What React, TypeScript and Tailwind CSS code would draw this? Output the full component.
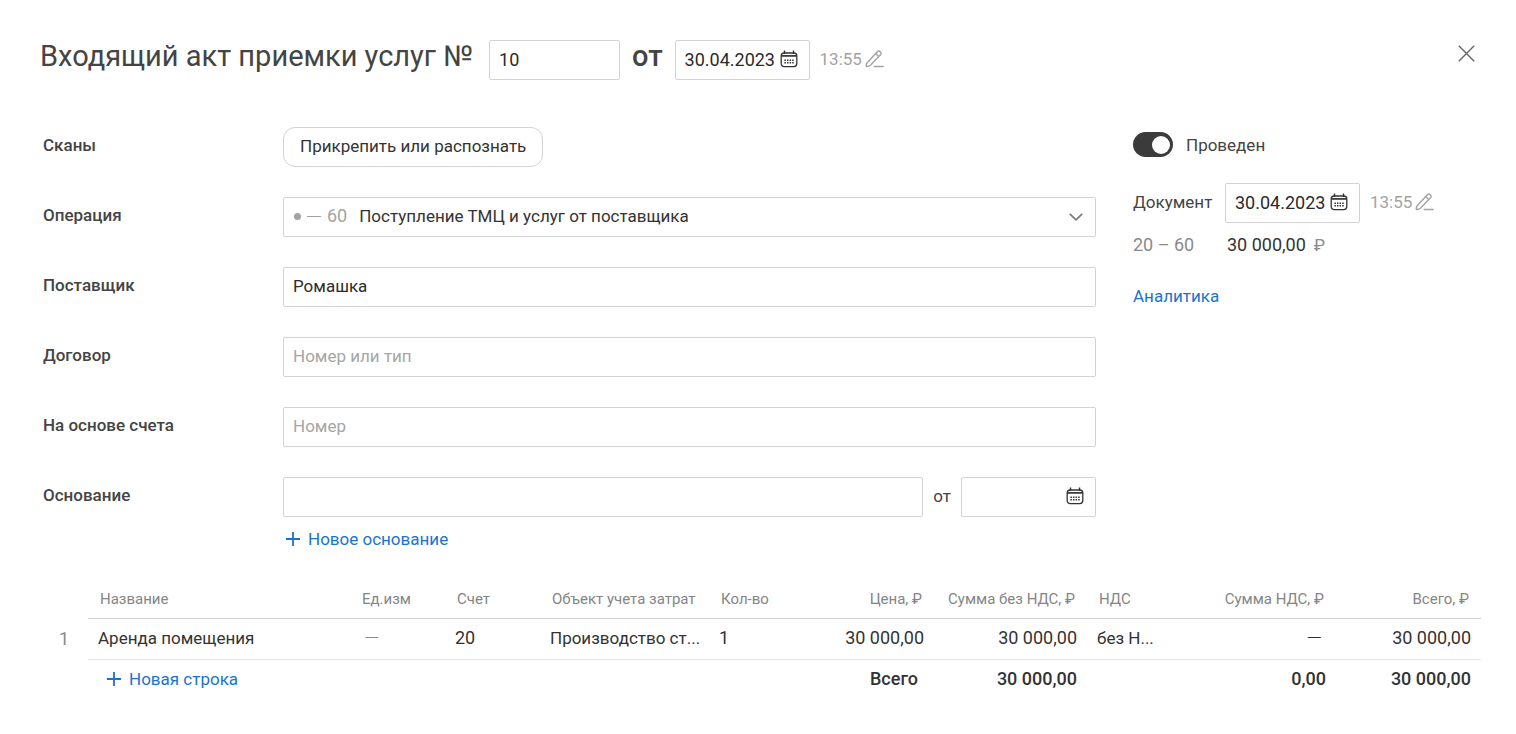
import { useId } from "react";
import type { ReactNode } from "react";

const field =
  "h-10 rounded-xs border border-[#d3d3d3] bg-white px-[9px] pb-0.5 text-[#2b2b2b] placeholder:text-[#a6a6a6] outline-none focus:border-[#1973d1]";

function CalendarIcon() {
  return (
    <svg width="18" height="18" viewBox="0 0 18 18" fill="none" stroke="#333" aria-hidden="true">
      <rect x="1.2" y="3" width="15.6" height="13.6" rx="3" strokeWidth="1.3" />
      <path d="M1.2 5.9H16.8" strokeWidth="1.7" />
      <path d="M4.5 0.6V4M13.5 0.6V4" strokeWidth="1.4" />
      <path d="M4.4 10.2H14M4.4 12.7H14" strokeWidth="1.4" strokeDasharray="1.5 1.1" />
    </svg>
  );
}

function PencilIcon() {
  return (
    <svg width="19" height="18" viewBox="0 0 19 18" fill="none" stroke="#a3a3a3" strokeWidth="1.4" aria-hidden="true">
      <path
        d="M1.3 16.5Q0.9 14.2 2.6 12.3L12.4 1.7Q13.8 0.5 15.2 1.7Q16.8 3.2 15.5 4.7L5.6 15Q3.8 16.6 1.3 16.5Z"
        strokeLinejoin="round"
      />
      <path d="M10.7 3.6L13.6 6.5M8.8 16.5H18.7" />
    </svg>
  );
}

function PlusIcon() {
  return (
    <svg width="16" height="16" viewBox="0 0 16 16" stroke="#1973d1" strokeWidth="1.8" aria-hidden="true">
      <path d="M8 1V15M1 8H15" />
    </svg>
  );
}

function DateField({ label, value }: { label: string; value?: string }) {
  return (
    <div className="flex h-10 w-[135px] shrink-0 items-center rounded-xs border border-[#d3d3d3] pr-[11px] focus-within:border-[#1973d1]">
      <input
        type="text"
        aria-label={label}
        defaultValue={value}
        className="h-full w-0 flex-1 bg-transparent pb-0.5 pl-[9px] text-lg text-[#2b2b2b] outline-none"
      />
      <button type="button" aria-label="Открыть календарь" className="mb-[3px]">
        <CalendarIcon />
      </button>
    </div>
  );
}

function Time() {
  return (
    <span className="flex items-center gap-[3px] text-[17px] leading-6 text-[#a3a3a3]">
      13:55
      <button type="button" aria-label="Изменить время">
        <PencilIcon />
      </button>
    </span>
  );
}

function Row({ label, id, children }: { label: string; id: string; children: ReactNode }) {
  return (
    <div className="flex">
      <label htmlFor={id} className="w-60 shrink-0 pt-1.5 text-[17px] leading-6 font-medium text-[#444]">
        {label}
      </label>
      <div className="min-w-0 flex-1">{children}</div>
    </div>
  );
}

function AddButton({ children }: { children: ReactNode }) {
  return (
    <button type="button" className="flex items-center gap-[7px] text-[17px] leading-6 text-[#1973d1]">
      <PlusIcon />
      {children}
    </button>
  );
}

export default function App() {
  const id = useId();
  return (
    <main className="min-h-screen bg-white pt-10 pr-[35px] pb-8 pl-10 font-['Roboto','Liberation_Sans',sans-serif] text-[17px] leading-6 text-[#333]">
      <header className="flex items-start">
        <h1 className="mr-4 text-[29px] leading-8 text-[#444]">Входящий акт приемки услуг №</h1>
        <input type="text" aria-label="Номер" defaultValue="10" className={`${field} w-[131px] text-lg`} />
        <span className="mx-3 text-[29px] leading-8 font-medium text-[#444]">от</span>
        <DateField label="Дата" value="30.04.2023" />
        <div className="ml-2.5 pt-[7px]">
          <Time />
        </div>
        <button type="button" aria-label="Закрыть" className="mr-1.5 ml-auto pt-[5px]">
          <svg width="17" height="17" viewBox="0 0 17 17" stroke="#666" strokeWidth="1.4" aria-hidden="true">
            <path d="M0.8 0.8L16.2 16.2M16.2 0.8L0.8 16.2" />
          </svg>
        </button>
      </header>

      <div className="mt-[47px] flex items-start gap-[37px] pl-[3px]">
        <form className="flex min-w-0 flex-1 flex-col gap-[30px]">
          <Row label="Сканы" id={`${id}s`}>
            <button
              id={`${id}s`}
              type="button"
              className="h-10 rounded-xl border border-[#d3d3d3] px-4 pb-0.5 text-[17px] text-[#333]"
            >
              Прикрепить или распознать
            </button>
          </Row>
          <Row label="Операция" id={`${id}o`}>
            <div className="relative flex h-10 items-center rounded-xs border border-[#d3d3d3] pb-0.5 pl-2.5">
              <span className="flex items-center gap-1.5 text-lg text-[#a3a3a3]">
                <span className="size-[7px] rounded-full bg-[#a3a3a3]" />
                <span className="h-px w-3.5 bg-[#a3a3a3]" />
                60
              </span>
              <select
                id={`${id}o`}
                className="ml-3 h-full flex-1 appearance-none bg-transparent text-[17px] text-[#333] outline-none"
              >
                <option>Поступление ТМЦ и услуг от поставщика</option>
              </select>
              <svg
                className="pointer-events-none absolute top-[15px] right-3"
                width="14"
                height="8"
                viewBox="0 0 14 8"
                fill="none"
                stroke="#777"
                strokeWidth="1.7"
                aria-hidden="true"
              >
                <path d="M0.8 0.8L7 6.8L13.2 0.8" />
              </svg>
            </div>
          </Row>
          <Row label="Поставщик" id={`${id}p`}>
            <input id={`${id}p`} type="text" defaultValue="Ромашка" className={`${field} w-full`} />
          </Row>
          <Row label="Договор" id={`${id}d`}>
            <input id={`${id}d`} type="text" placeholder="Номер или тип" className={`${field} w-full`} />
          </Row>
          <Row label="На основе счета" id={`${id}n`}>
            <input id={`${id}n`} type="text" placeholder="Номер" className={`${field} w-full`} />
          </Row>
          <Row label="Основание" id={`${id}b`}>
            <div className="flex items-center">
              <input id={`${id}b`} type="text" className={`${field} min-w-0 flex-1`} />
              <span className="w-[38px] pb-0.5 text-center text-[#444]">от</span>
              <DateField label="Дата основания" />
            </div>
            <div className="mt-2.5 pl-0.5">
              <AddButton>Новое основание</AddButton>
            </div>
          </Row>
        </form>

        <aside className="w-[348px] shrink-0">
          <label className="flex items-center gap-[13px] pt-[5px] text-[#444]">
            <input
              type="checkbox"
              role="switch"
              defaultChecked
              className="flex h-[25px] w-10 appearance-none items-center rounded-full bg-[#bbb] px-[3px] before:size-[18px] before:rounded-full before:bg-white checked:justify-end checked:bg-[#3b3b3b]"
            />
            Проведен
          </label>
          <div className="mt-[26px] flex items-center">
            <span className="w-[92px] pb-0.5 text-[#444]">Документ</span>
            <DateField label="Дата документа" value="30.04.2023" />
            <div className="ml-2.5 pb-0.5">
              <Time />
            </div>
          </div>
          <div className="mt-2.5 flex text-lg leading-6 text-[#333]">
            <span className="w-[94px] text-[#8a8a8a]">20 – 60</span>
            <span>30 000,00</span>
            <span className="ml-2 text-[17px] text-[#8a8a8a]">₽</span>
          </div>
          <a href="#analytics" className="mt-[27px] inline-block text-[#1973d1]">
            Аналитика
          </a>
        </aside>
      </div>

      <table className="mt-7 ml-[3px] w-[calc(100%-3px)] table-fixed border-separate border-spacing-0">
        <colgroup>
          <col className="w-[45px]" />
          <col />
          <col className="w-[95px]" />
          <col className="w-[95px]" />
          <col className="w-[169px]" />
          <col className="w-[92px]" />
          <col className="w-[133px]" />
          <col className="w-[153px]" />
          <col className="w-[75px]" />
          <col className="w-[174px]" />
          <col className="w-[145px]" />
        </colgroup>
        <thead>
          <tr className="h-10 text-left text-[15px] whitespace-nowrap text-[#858585] [&>th]:px-3 [&>th]:font-normal [&>th:not(:first-child)]:border-b [&>th:not(:first-child)]:border-[#d0d0d0]">
            <th aria-label="Номер строки" />
            <th>Название</th>
            <th>Ед.изм</th>
            <th>Счет</th>
            <th>Объект учета затрат</th>
            <th>Кол-во</th>
            <th className="text-right">Цена, ₽</th>
            <th className="text-right">Сумма без НДС, ₽</th>
            <th>НДС</th>
            <th className="text-right">Сумма НДС, ₽</th>
            <th className="text-right">Всего, ₽</th>
          </tr>
        </thead>
        <tbody>
          <tr className="h-[41px] text-lg leading-6 whitespace-nowrap text-[#333] [&>td]:px-2.5 [&>td]:pt-0 [&>td]:pb-0.5 [&>td:not(:first-child)]:border-b [&>td:not(:first-child)]:border-[#e6e6e6]">
            <td className="text-[#8a8a8a]">
              <span className="pl-1.5">1</span>
            </td>
            <td className="text-[17px]">Аренда помещения</td>
            <td className="text-xl leading-6 font-light text-[#8a8a8a]">
              <span className="pl-1">—</span>
            </td>
            <td>20</td>
            <td className="text-[17px]">Производство ст...</td>
            <td>1</td>
            <td className="text-right">30 000,00</td>
            <td className="text-right">30 000,00</td>
            <td className="text-[17px]">без Н...</td>
            <td className="text-right text-xl leading-6 font-light">
              <span className="pr-1">—</span>
            </td>
            <td className="text-right">30 000,00</td>
          </tr>
        </tbody>
        <tfoot>
          <tr className="h-10 text-lg leading-6 whitespace-nowrap text-[#333] [&>td]:px-2.5 [&>td]:pt-0 [&>td]:pb-0.5 [&>td]:text-right [&>td]:font-medium">
            <td />
            <td colSpan={4}>
              <div className="pl-2 font-normal">
                <AddButton>Новая строка</AddButton>
              </div>
            </td>
            <td />
            <td>
              <span className="pr-1.5">Всего</span>
            </td>
            <td>30 000,00</td>
            <td />
            <td>0,00</td>
            <td>30 000,00</td>
          </tr>
        </tfoot>
      </table>
    </main>
  );
}
